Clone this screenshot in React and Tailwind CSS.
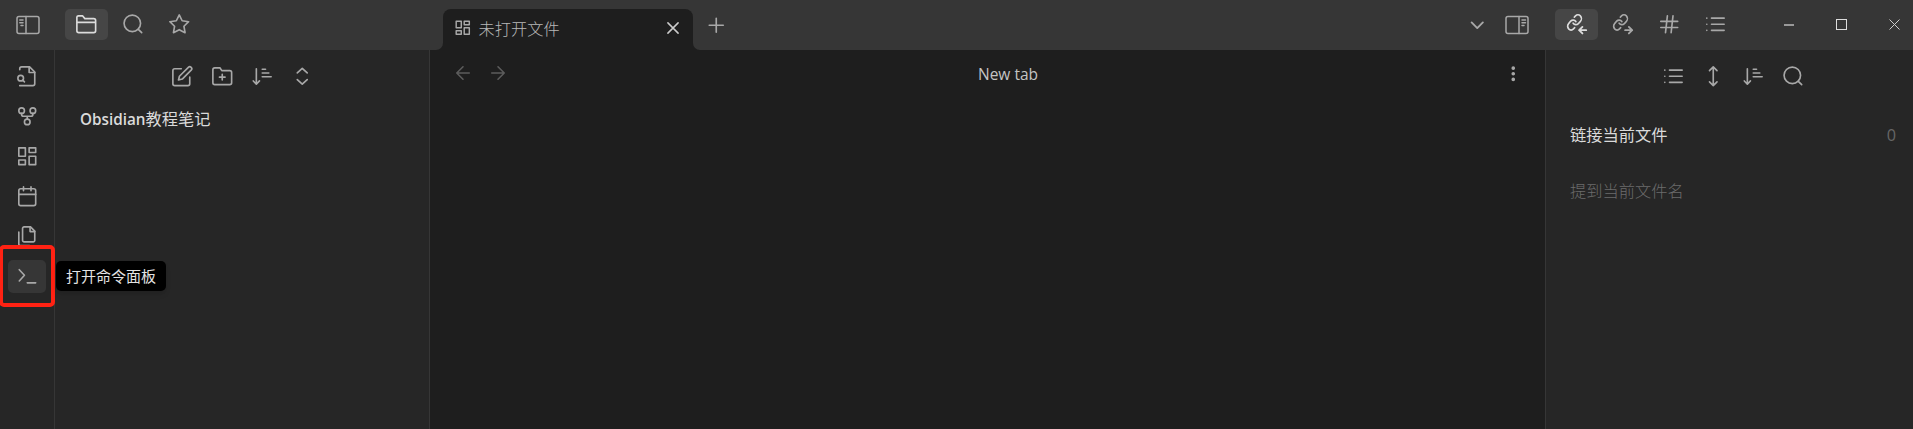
import React from "react";

const CJK = "font-['Open_Sans','Noto_Sans_CJK_SC',sans-serif]";

function Icon({ children, className = "size-[22.5px]", sw = 1.75 }) {
  return (
    <svg viewBox="0 0 24 24" fill="none" stroke="currentColor" strokeWidth={sw} strokeLinecap="round" strokeLinejoin="round" className={`shrink-0 ${className}`}>
      {children}
    </svg>
  );
}

const Search = () => (
  <Icon><circle cx="11" cy="11" r="8.8" /><path d="m21 21-3.6-3.6" /></Icon>
);
const Folder = () => (
  <Icon><path d="M2 19V4.5A1.7 1.7 0 0 1 3.7 3H8l2.5 3H20a2 2 0 0 1 2 2v11a2 2 0 0 1-2 2H4a2 2 0 0 1-2-2ZM2 10h20" /></Icon>
);
const Star = () => (
  <Icon><path d="m12 2 3.09 6.26L22 9.27l-5 4.87 1.18 6.88L12 17.77l-6.18 3.25L7 14.14 2 9.27l6.91-1.01L12 2z" /></Icon>
);
const FileSearch = () => (
  <Icon><path d="M4 5V4a2 2 0 0 1 2-2h8.5L20 7.5V20a2 2 0 0 1-2 2H4" /><path d="M14 2v6h6" /><circle cx="5" cy="14" r="3" /><path d="m9 18-1.8-1.8" /></Icon>
);
const Fork = () => (
  <Icon><circle cx="12" cy="18" r="3" /><circle cx="6" cy="6" r="3" /><circle cx="18" cy="6" r="3" /><path d="M18 9v1a2 2 0 0 1-2 2H8a2 2 0 0 1-2-2V9M12 12v3" /></Icon>
);
const Dashboard = (p) => (
  <Icon {...p}><path d="M3 3h7v9H3zM14 3h7v5h-7zM14 12h7v9h-7zM3 16h7v5H3z" /></Icon>
);
const Calendar = () => (
  <Icon><rect x="3" y="4" width="18" height="18" rx="2" /><path d="M16 2v4M8 2v4M3 10h18" /></Icon>
);
const Files = () => (
  <Icon><path d="M15.5 2H8.6c-.4 0-.8.2-1.1.5-.3.3-.5.7-.5 1.1v12.8c0 .4.2.8.5 1.1.3.3.7.5 1.1.5h9.8c.4 0 .8-.2 1.1-.5.3-.3.5-.7.5-1.1V6.5L15.5 2z" /><path d="M3 7.6v12.8c0 .4.2.8.5 1.1.3.3.7.5 1.1.5h9.8M15 2v5h5" /></Icon>
);
const Terminal = () => (
  <Icon><path d="m3.5 17 5.5-6-5.5-6M12 19h9" /></Icon>
);
const Edit = () => (
  <Icon><path d="M11 4H4a2 2 0 0 0-2 2v14a2 2 0 0 0 2 2h14a2 2 0 0 0 2-2v-7" /><path d="M18.5 2.5a2.12 2.12 0 0 1 3 3L12 15l-4 1 1-4Z" /></Icon>
);
const FolderPlus = () => (
  <Icon><path d="M4 21h16a2 2 0 0 0 2-2V8a2 2 0 0 0-2-2h-8.500L9.500 3H4a2 2 0 0 0-2 2v14a2 2 0 0 0 2 2ZM12 10v6M9 13h6" /></Icon>
);
const Sort = () => (
  <Icon><path d="m2.500 17 3.200 3.500L9 17M5.700 20V4M12 4.500h3.500M12 8.500h7M12 12.500h9.500" /></Icon>
);
const UpDownChevrons = () => (
  <Icon><path d="m6.700 15.500 5.300 5 5.300-5M6.700 8.500l5.300-5 5.300 5" /></Icon>
);
const UpDown = () => (
  <Icon><path d="m8 18 4 4 4-4M8 6l4-4 4 4M12 2v20" /></Icon>
);
const List = () => (
  <Icon><path d="M8 5.500h13.500M8 12h13.500M8 18.500h13.500M3 5.500h.01M3 12h.01M3 18.500h.01" /></Icon>
);
const Hash = () => (
  <Icon><path d="M3 9h18M3 15.500h18M10 3 8 21M16 3l-2 18" /></Icon>
);
const Links = ({ out }) => (
  <Icon>
    <g transform="translate(0.200 0.200) scale(0.740 0.820)" strokeWidth="2.300">
      <path d="M10 13a5 5 0 0 0 7.540.540l3-3a5 5 0 0 0-7.070-7.070l-1.720 1.710" />
      <path d="M14 11a5 5 0 0 0-7.540-.540l-3 3a5 5 0 0 0 7.070 7.070l1.710-1.710" />
    </g>
    {out ? <path strokeWidth="2" d="M14 18.300h7.500M18 14.800l3.500 3.500-3.500 3.500" /> : <path strokeWidth="2" d="M21.500 18.300H14M17.500 14.800 14 18.300l3.500 3.500" />}
  </Icon>
);

function PanelIcon({ right }) {
  return (
    <svg width="24" height="20" viewBox="0 0 24 20" fill="none" stroke="currentColor" strokeWidth="1.500" strokeLinecap="round" className="shrink-0">
      <rect x="1" y="1.500" width="22" height="17" rx="2" />
      {right ? <path d="M14 1.500v17M17 5h3.500M17 7.800h3.500M17 10.600h2" /> : <path d="M10 1.500v17M3.800 5H7M3.800 7.800H7M5 10.600h2" />}
    </svg>
  );
}

function HeadButton({ active, children }) {
  return (
    <div className={`flex h-[31px] w-[43px] items-center justify-center rounded-[5px] ${active ? "bg-[#464646] text-[#dcdcdc]" : ""}`}>
      {children}
    </div>
  );
}

const RibbonButton = ({ active, children }) => (
  <div className={`flex h-[33px] w-[38px] items-center justify-center rounded-[5px] ${active ? "bg-[#363636]" : ""}`}>{children}</div>
);

function Header() {
  return (
    <header className="flex h-[50px] shrink-0 bg-[#363636]">
      <div className="flex w-[443px] shrink-0 items-start pt-[9px] pl-[15.500px]">
        <div className="flex h-[31px] w-[49.500px] items-center"><PanelIcon /></div>
        <div className="flex gap-[3.250px]">
          <HeadButton active><Folder /></HeadButton>
          <HeadButton><Search /></HeadButton>
          <HeadButton><Star /></HeadButton>
        </div>
      </div>
      <div className="relative mt-[9px] flex h-[41px] w-[250px] shrink-0 items-center rounded-t-[8px] bg-[#1e1e1e] pr-[11px] pb-[3px] pl-[11px]">
        <svg className="absolute bottom-0 -left-[7px] size-[7px]" viewBox="0 0 7 7"><path d="M7 0v7H0a7 7 0 0 0 7-7Z" fill="#1e1e1e" /></svg>
        <svg className="absolute -right-[7px] bottom-0 size-[7px]" viewBox="0 0 7 7"><path d="M0 0v7h7a7 7 0 0 1-7-7Z" fill="#1e1e1e" /></svg>
        <Dashboard className="size-[17.500px]" sw={2} />
        <span className="ml-[7px] flex-1 pt-px text-[16.250px] leading-[20px] font-light text-[#b8b8b8]">未打开文件</span>
        <Icon className="size-[18px] text-[#cccccc]" sw={2}><path d="M18.800 5.200l-13.600 13.600M5.200 5.200l13.600 13.600" /></Icon>
      </div>
      <div className="flex flex-1 items-start pt-[9px] pl-[12px]">
        <div className="flex h-[32px] items-center"><Icon><path d="M12 4.500v15M4.500 12h15" /></Icon></div>
      </div>
      <div className="flex shrink-0 items-start pt-[9px]">
        <div className="flex h-[32px] w-[39px] items-center"><Icon sw={2}><path d="m6 9 6 6 6-6" /></Icon></div>
        <div className="flex h-[31px] w-[50.500px] items-center"><PanelIcon right /></div>
        <div className="flex gap-[3.250px]">
          <HeadButton active><Links /></HeadButton>
          <HeadButton><Links out /></HeadButton>
          <HeadButton><Hash /></HeadButton>
          <HeadButton><List /></HeadButton>
        </div>
        <div className="ml-[25px] flex h-[31px] w-[151px] items-center">
          <div className="ml-[22px] h-[2px] w-[10px] bg-[#999999]" />
          <div className="ml-[42px] size-[11px] border border-[#dddddd]" />
          <svg className="ml-[42px] size-[11px] text-[#cccccc]" viewBox="0 0 11 11" stroke="currentColor"><path d="m.5.5 10 10M10.500.5l-10 10" /></svg>
        </div>
      </div>
    </header>
  );
}

export default function App() {
  return (
    <div className={`flex h-[429px] w-[1913px] flex-col overflow-hidden bg-[#1e1e1e] text-[#a8a8a8] ${CJK}`}>
      <Header />
      <div className="flex min-h-0 flex-1">
        <nav className="relative flex w-[55px] shrink-0 flex-col items-center gap-[7px] border-r border-[#363636] bg-[#262626] pt-[10px]">
          <RibbonButton><FileSearch /></RibbonButton>
          <RibbonButton><Fork /></RibbonButton>
          <RibbonButton><Dashboard /></RibbonButton>
          <RibbonButton><Calendar /></RibbonButton>
          <RibbonButton><Files /></RibbonButton>
          <RibbonButton active><Terminal /></RibbonButton>
          <div className="absolute top-[195px] -left-px z-10 h-[62px] w-[56px] rounded-[5px] border-4 border-[#ff2213]" />
          <div className="absolute top-[211px] left-[56px] z-20 flex h-[30px] w-[110px] items-center justify-center rounded-[5px] bg-black pb-px text-[15px] leading-[20px] whitespace-nowrap text-[#e4e4e4] shadow-md">打开命令面板</div>
        </nav>
        <aside className="flex w-[375px] shrink-0 flex-col border-r border-[#363636] bg-[#262626]">
          <div className="flex justify-center gap-[17.500px] pt-[15px] pl-[1px]">
            <Edit /><FolderPlus /><Sort /><UpDownChevrons />
          </div>
          <div className="mt-[20px] pl-[25px] text-[16.250px] leading-[22px] text-[#dadada]"><span className="font-['Open_Sans'] text-[15.250px] font-semibold">Obsidian</span>教程笔记</div>
        </aside>
        <main className="flex min-w-0 flex-1 items-start pt-[13px] pr-[21px] pl-[23px]">
          <div className="flex w-[100px] gap-[15px] text-[#5c5c5c]">
            <Icon className="size-[20px]" sw={1.9}><path d="M19.500 12h-15M12 19.500 4.500 12 12 4.500" /></Icon>
            <Icon className="size-[20px]" sw={1.9}><path d="M4.500 12h15M12 4.500l7.500 7.500-7.500 7.500" /></Icon>
          </div>
          <div className="flex-1 pl-[39px] text-center text-[15.500px] leading-[22px] text-[#c4c4c4]">New tab</div>
          <div className="flex w-[100px] justify-end">
            <Icon><g fill="currentColor" strokeWidth="1.500"><circle cx="12" cy="5.500" r="1.200" /><circle cx="12" cy="11.500" r="1.200" /><circle cx="12" cy="17.500" r="1.200" /></g></Icon>
          </div>
        </main>
        <aside className="flex w-[368px] shrink-0 flex-col border-l border-[#363636] bg-[#262626]">
          <div className="flex justify-center gap-[17.500px] pt-[15px] pl-[7px]">
            <List /><UpDown /><Sort /><Search />
          </div>
          <div className="mt-[36px] flex justify-between pr-[17px] pl-[24px] text-[16.250px] leading-[22px]">
            <span className="text-[#dadada]">链接当前文件</span>
            <span className="text-[#666666]">0</span>
          </div>
          <div className="mt-[34px] pl-[24px] text-[16.250px] leading-[22px] font-light text-[#6c6c6c]">提到当前文件名</div>
        </aside>
      </div>
    </div>
  );
}
